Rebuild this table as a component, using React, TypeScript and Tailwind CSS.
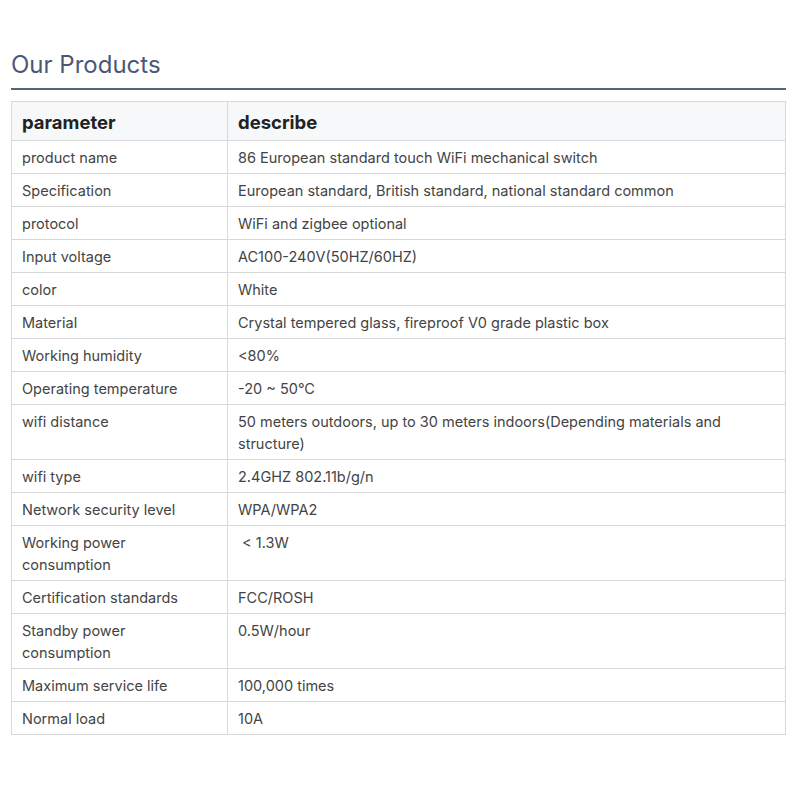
import React, { type ReactElement } from 'react'

const rows: Array<[string, string]> = [
	['product name', '86 European standard touch WiFi mechanical switch'],
	['Specification', 'European standard, British standard, national standard common'],
	['protocol', 'WiFi and zigbee optional'],
	['Input voltage', 'AC100-240V(50HZ/60HZ)'],
	['color', 'White'],
	['Material', 'Crystal tempered glass, fireproof V0 grade plastic box'],
	['Working humidity', '<80%'],
	['Operating temperature', '-20 ~ 50°C'],
	['wifi distance', '50 meters outdoors, up to 30 meters indoors(Depending materials and structure)'],
	['wifi type', '2.4GHZ 802.11b/g/n'],
	['Network security level', 'WPA/WPA2'],
	['Working power consumption', '\u00a0< 1.3W'],
	['Certification standards', 'FCC/ROSH'],
	['Standby power consumption', '0.5W/hour'],
	['Maximum service life', '100,000 times'],
	['Normal load', '10A']
]

export default function App (): ReactElement {
	return (
		<main className="min-h-[800px] bg-white font-['Inter','Noto_Sans',sans-serif]">
			<div className="pt-[50px] pl-[11px] pr-[14px]">
				<h2 className="text-[24px] leading-[30px] text-[#4a5877] pb-[8px] border-b-2 border-[#56637c]">
					{'Our Products'}
				</h2>
				<table className="mt-[11px] w-full border-collapse border border-[#d8d8d8] text-[14.5px] leading-[22px] text-[#444]">
					<thead>
						<tr className="bg-[#f7f8fa]">
							<th className="w-[216px] border border-[#d8d8d8] text-left font-bold text-[18.5px] leading-[26px] text-[#222] pl-[10px] pr-[16px] pt-[7px] pb-[5px]">
								{'parameter'}
							</th>
							<th className="border border-[#d8d8d8] text-left font-bold text-[18.5px] leading-[26px] text-[#222] px-[10px] pt-[7px] pb-[5px]">
								{'describe'}
							</th>
						</tr>
					</thead>
					<tbody>
						{rows.map(([k, v]) => (
							<tr key={k}>
								<td className="align-top border border-[#d8d8d8] pl-[10px] pr-[16px] pt-[6px] pb-[4px]">{k}</td>
								<td className="align-top border border-[#d8d8d8] px-[10px] pt-[6px] pb-[4px]">{v}</td>
							</tr>
						))}
					</tbody>
				</table>
			</div>
		</main>
	)
}
